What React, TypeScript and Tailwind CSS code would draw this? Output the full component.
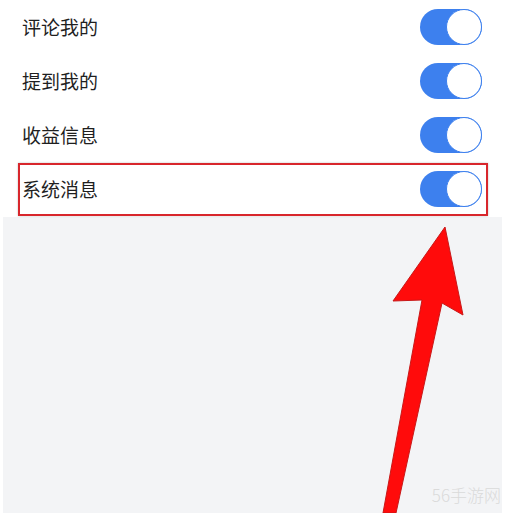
const items = ["评论我的", "提到我的", "收益信息", "系统消息"];

const Toggle = () => (
  <div className="flex h-[36px] w-[62px] justify-end rounded-full bg-[#3d80ee]">
    <div className="h-[36px] w-[36px] rounded-full border-[1.5px] border-[#3d80ee] bg-white" />
  </div>
);

export default function App() {
  return (
    <div
      className="relative flex h-[513px] w-[511px] flex-col overflow-hidden bg-white"
      style={{ fontFamily: '"Noto Sans CJK SC", "Noto Sans", sans-serif' }}
    >
      <div className="flex flex-col">
        {items.map((label) => (
          <div key={label} className="flex h-[54px] items-center justify-between pl-[22px] pr-[29px]">
            <span className="text-[19px] text-[#1f1f1f]">{label}</span>
            <Toggle />
          </div>
        ))}
      </div>
      <div className="mx-[3px] mt-[1px] flex w-[499px] flex-1 items-end justify-end bg-[#f3f4f6] pb-[6px] pr-[1px]">
        <span className="text-[17px] font-light text-[#dadada]">56手游网</span>
      </div>

      {/* highlight box */}
      <div className="absolute left-[18px] top-[163px] h-[53px] w-[470px] border-2 border-[#d8262c] shadow-[0_0_2px_rgba(0,0,0,0.25)]" />

      {/* arrow */}
      <svg className="absolute left-0 top-0" width="511" height="513" viewBox="0 0 511 513">
        <polygon
          points="445,227 463,315 442,303 396,513 383,513 422,300 393,301"
          fill="#ff0b0b"
          stroke="#c81818"
          strokeWidth="1"
          strokeLinejoin="miter"
        />
      </svg>
    </div>
  );
}
